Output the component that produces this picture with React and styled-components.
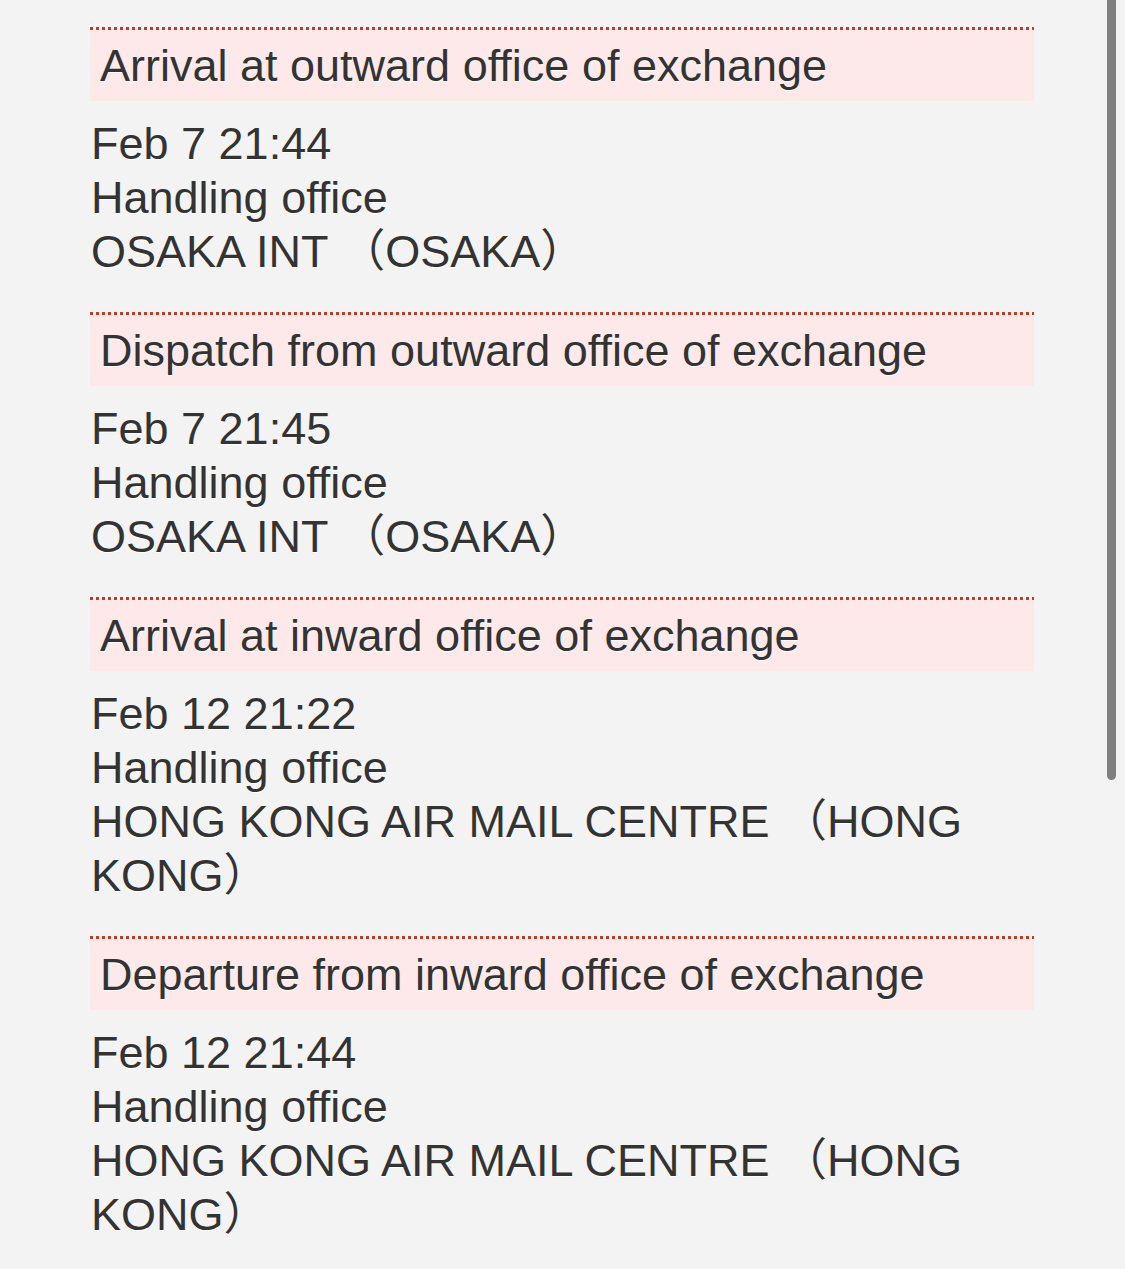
import React from "react";
import styled, { createGlobalStyle } from "styled-components";

const Global = createGlobalStyle`
  html, body {
    margin: 0;
    padding: 0;
    background: #f3f3f3;
  }
  body {
    font-family: "Liberation Sans", Arial, "Noto Sans CJK JP", sans-serif;
    color: #333;
    overflow: hidden;
  }
`;

const Page = styled.div`
  position: relative;
  min-height: 1269px;
  padding: 27px 91px 0 90px;
  box-sizing: border-box;
`;

const Section = styled.section`
  display: flex;
  flex-direction: column;
  padding-bottom: 33px;
`;

const Header = styled.h2`
  position: relative;
  margin: 3px 0 0;
  height: 71px;
  padding: 0 0 0 10px;
  background-color: #fde9e9;
  display: flex;
  align-items: center;
  font-size: 45px;
  font-weight: normal;
  color: #333;
  text-shadow: 0 1px 0 #fff;
  white-space: nowrap;

  &::before {
    content: "";
    position: absolute;
    left: 0;
    right: 0;
    top: -3px;
    height: 3px;
    background-image: linear-gradient(to right, #c63a23 50%, transparent 50%);
    background-size: 6px 3px;
    background-repeat: repeat-x;
  }
`;

const Body = styled.div`
  margin-top: 16px;
  padding-left: 1px;
  font-size: 45px;
  line-height: 54px;
  text-shadow: 0 1px 0 #fff;
`;

const Line = styled.div``;

const Scroll = styled.div`
  position: absolute;
  top: 0;
  left: 1107px;
  width: 9px;
  height: 780px;
  background: #7f7f7f;
  border-radius: 0 0 5px 5px;
`;

const events = [
  {
    title: "Arrival at outward office of exchange",
    date: "Feb 7 21:44",
    office: "OSAKA INT （OSAKA）",
  },
  {
    title: "Dispatch from outward office of exchange",
    date: "Feb 7 21:45",
    office: "OSAKA INT （OSAKA）",
  },
  {
    title: "Arrival at inward office of exchange",
    date: "Feb 12 21:22",
    office: "HONG KONG AIR MAIL CENTRE （HONG KONG）",
  },
  {
    title: "Departure from inward office of exchange",
    date: "Feb 12 21:44",
    office: "HONG KONG AIR MAIL CENTRE （HONG KONG）",
  },
];

export default function App() {
  return (
    <>
      <Global />
      <Page>
        {events.map((e, i) => (
          <Section key={i}>
            <Header>{e.title}</Header>
            <Body>
              <Line>{e.date}</Line>
              <Line>Handling office</Line>
              <Line>{e.office}</Line>
            </Body>
          </Section>
        ))}
        <Scroll />
      </Page>
    </>
  );
}
